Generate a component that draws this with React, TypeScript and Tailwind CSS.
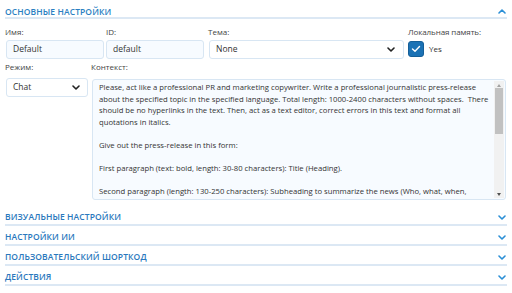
import React from "react";

const ChevronDown = ({ className = "" }: { className?: string }) => (
  <svg width="8" height="5" viewBox="0 0 8 5" className={className}>
    <path d="M1 1 L4 4 L7 1" fill="none" stroke="currentColor" strokeWidth="1.6" strokeLinecap="round" strokeLinejoin="round" />
  </svg>
);

const ChevronUp = ({ className = "" }: { className?: string }) => (
  <svg width="8" height="5" viewBox="0 0 8 5" className={className}>
    <path d="M1 4 L4 1 L7 4" fill="none" stroke="currentColor" strokeWidth="1.6" strokeLinecap="round" strokeLinejoin="round" />
  </svg>
);

const Collapsed = ({ title }: { title: string }) => (
  <div className="h-[20px] border-b-2 border-[#dce8f4] flex items-center justify-between pt-[4px] pr-[1px]">
    <span className="text-[8.5px] leading-[10px] font-semibold text-[#2a78bd] tracking-[0.1px]">{title}</span>
    <ChevronDown className="text-[#2b8fd6]" />
  </div>
);

const lines = [
  "Please, act like a professional PR and marketing copywriter. Write a professional journalistic press-release",
  "about the specified topic in the specified language. Total length: 1000-2400 characters without spaces.  There",
  "should be no hyperlinks in the text. Then, act as a text editor, correct errors in this text and format all",
  "quotations in italics.",
  "",
  "Give out the press-release in this form:",
  "",
  "First paragraph (text: bold, length: 30-80 characters): Title (Heading).",
  "",
  "Second paragraph (length: 130-250 characters): Subheading to summarize the news (Who, what, when,",
  "where, why and how)."
];

export default function App() {
  return (
    <div className="w-[512px] h-[293px] bg-white px-[5px] pt-[5px] font-['Open_Sans',sans-serif] text-[#333] overflow-hidden">
      <div className="h-[14px] border-b-2 border-[#dce8f4] flex items-center justify-between pr-[1px] pt-[1px]">
        <span className="text-[8.5px] leading-[10px] font-semibold text-[#2a7fc2] tracking-[0.1px]">ОСНОВНЫЕ НАСТРОЙКИ</span>
        <ChevronUp className="text-[#2b8fd6]" />
      </div>

      <div className="flex mt-[8px]">
        <div className="w-[99px] shrink-0">
          <div className="text-[8px] leading-[10px] h-[10px] text-[#444]">Имя:</div>
          <div className="ml-[1px] mt-[3px] h-[19px] w-[98px] border border-[#d8e6f3] bg-[#f7fbff] rounded-[3px] flex items-center pl-[6px] text-[8.5px]">Default</div>
        </div>
        <div className="w-[102px] shrink-0 ml-[2px]">
          <div className="text-[8px] leading-[10px] h-[10px] text-[#444]">ID:</div>
          <div className="mt-[3px] h-[19px] w-[98px] border border-[#d8e6f3] bg-[#f7fbff] rounded-[3px] flex items-center pl-[6px] text-[8.5px]">default</div>
        </div>
        <div className="w-[200px] shrink-0">
          <div className="text-[8px] leading-[10px] h-[10px] text-[#444]">Тема:</div>
          <div className="ml-[1px] mt-[3px] h-[19px] w-[195px] border border-[#d8e6f3] bg-white rounded-[3px] flex items-center justify-between pl-[6px] pr-[8px] text-[8.5px]">
            <span>None</span>
            <ChevronDown className="text-[#222]" />
          </div>
        </div>
        <div className="shrink-0">
          <div className="text-[8px] leading-[10px] h-[10px] text-[#444] tracking-[-0.1px]">Локальная память:</div>
          <div className="mt-[4px] flex items-center gap-[5px]">
            <div className="w-[16px] h-[16px] rounded-[3px] bg-[#1b72b5] border border-[#155f98] flex items-center justify-center">
              <svg width="10" height="8" viewBox="0 0 10 8">
                <path d="M1.5 4 L4 6.3 L8.5 1.5" fill="none" stroke="white" strokeWidth="1.4" strokeLinecap="round" strokeLinejoin="round" />
              </svg>
            </div>
            <span className="text-[8px]">Yes</span>
          </div>
        </div>
      </div>

      <div className="flex mt-[3px]">
        <div className="w-[86px] shrink-0">
          <div className="text-[8px] leading-[10px] h-[10px] text-[#444]">Режим:</div>
          <div className="ml-[1px] mt-[6px] h-[19px] w-[82px] border border-[#d8e6f3] bg-white rounded-[3px] flex items-center justify-between pl-[6px] pr-[7px] text-[8.5px]">
            <span>Chat</span>
            <ChevronDown className="text-[#222]" />
          </div>
        </div>
        <div className="flex-1">
          <div className="text-[8px] leading-[10px] h-[10px] text-[#444]">Контекст:</div>
          <div className="ml-[1px] mt-[7px] h-[121px] w-[414px] border border-[#d8e6f3] bg-[#f7fbff] rounded-[3px] flex overflow-hidden">
            <div className="flex-1 pl-[6px] pt-[2px] text-[7.7px] leading-[11.5px] text-[#333] overflow-hidden">
              {lines.map((l, i) => (
                <div key={i} className="whitespace-pre h-[11.5px]">{l}</div>
              ))}
            </div>
            <div className="w-[10px] bg-[#f1f1f1] flex flex-col items-center justify-between mr-[1px] my-[1px]">
              <div className="h-[8px] flex items-center justify-center">
                <div className="w-0 h-0 border-l-[2.5px] border-r-[2.5px] border-b-[3px] border-l-transparent border-r-transparent border-b-[#a3a3a3]" />
              </div>
              <div className="w-[8px] h-[46px] bg-[#c1c1c1] -mt-[1px]" />
              <div className="flex-1" />
              <div className="h-[8px] flex items-center justify-center">
                <div className="w-0 h-0 border-l-[2.5px] border-r-[2.5px] border-t-[3px] border-l-transparent border-r-transparent border-t-[#505050]" />
              </div>
            </div>
          </div>
        </div>
      </div>

      <div className="mt-[6px]">
        <Collapsed title="ВИЗУАЛЬНЫЕ НАСТРОЙКИ" />
        <Collapsed title="НАСТРОЙКИ ИИ" />
        <Collapsed title="ПОЛЬЗОВАТЕЛЬСКИЙ ШОРТКОД" />
        <Collapsed title="ДЕЙСТВИЯ" />
      </div>
    </div>
  );
}
